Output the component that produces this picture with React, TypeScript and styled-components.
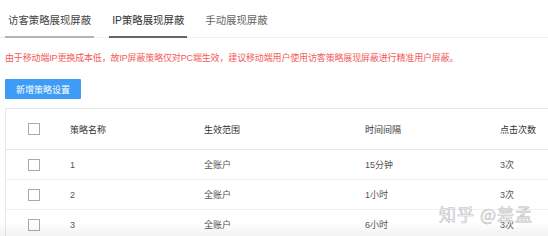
import React from 'react'
import styled, { createGlobalStyle } from 'styled-components'

const GlobalStyle = createGlobalStyle`
  html, body {
    margin: 0;
    padding: 0;
    background: #fff;
    overflow: hidden;
  }
  body {
    font-family: 'Liberation Sans', 'Noto Sans CJK SC', sans-serif;
    color: #555;
  }
`

const tabs = ['访客策略展现屏蔽', 'IP策略展现屏蔽', '手动展现屏蔽']

const rows = [
  { name: '1', scope: '全账户', interval: '15分钟', clicks: '3次' },
  { name: '2', scope: '全账户', interval: '1小时', clicks: '3次' },
  { name: '3', scope: '全账户', interval: '6小时', clicks: '3次' },
]

const App = () => {
  return (
    <Page>
      <GlobalStyle />
      <TabBar>
        {tabs.map((t, i) => (
          <Tab key={t} state={i === 0 ? 'visited' : i === 1 ? 'active' : 'idle'}>
            {t}
          </Tab>
        ))}
      </TabBar>
      <Notice>
        由于移动端IP更换成本低，故IP屏蔽策略仅对PC端生效，建议移动端用户使用访客策略展现屏蔽进行精准用户屏蔽。
      </Notice>
      <AddButton type='button'>新增策略设置</AddButton>
      <Table>
        <Row header>
          <CheckCell>
            <Checkbox />
          </CheckCell>
          <Cell>策略名称</Cell>
          <Cell>生效范围</Cell>
          <Cell>时间间隔</Cell>
          <Cell>点击次数</Cell>
        </Row>
        {rows.map(r => (
          <Row key={r.name}>
            <CheckCell>
              <Checkbox />
            </CheckCell>
            <Cell>{r.name}</Cell>
            <Cell>{r.scope}</Cell>
            <Cell>{r.interval}</Cell>
            <Cell>{r.clicks}</Cell>
          </Row>
        ))}
      </Table>
      <Watermark>知乎 @差孟</Watermark>
      <BottomFade />
    </Page>
  )
}

const Page = styled.main`
  position: relative;
  width: 548px;
  height: 236px;
  overflow: hidden;
  padding-left: 5px;
  box-sizing: border-box;
`

const TabBar = styled.div`
  display: flex;
  height: 38px;
  border-bottom: 1px solid #eee;
  box-sizing: border-box;
  margin-left: -5px;
  padding-left: 5px;
`

const Tab = styled.div<{ state: 'visited' | 'active' | 'idle' }>`
  display: flex;
  align-items: center;
  padding: 3px 3px 0;
  margin-right: 15px;
  margin-bottom: -1px;
  font-size: 10.4px;
  color: ${p => (p.state === 'active' ? '#333' : p.state === 'visited' ? '#444' : '#666')};
  border-bottom: 2px solid
    ${p => (p.state === 'active' ? '#666' : p.state === 'visited' ? '#b4b4b4' : 'transparent')};
`

const Notice = styled.p`
  margin: 0;
  height: 41px;
  line-height: 41px;
  font-size: 9px;
  letter-spacing: -0.15px;
  color: #f25a5a;
  white-space: nowrap;
`

const AddButton = styled.button`
  display: block;
  width: 76px;
  height: 20px;
  padding: 0;
  border: none;
  border-radius: 1px;
  background: #3e9cf6;
  color: #fff;
  font-family: inherit;
  font-size: 9px;
  cursor: pointer;
`

const Table = styled.div`
  margin-top: 9px;
  width: 560px;
  border-top: 1px solid #e6e6e6;
  border-left: 1px solid #e6e6e6;
`

const Row = styled.div<{ header?: boolean }>`
  display: grid;
  grid-template-columns: 64px 134px 161px 135px 1fr;
  align-items: center;
  height: ${p => (p.header ? '40px' : '29px')};
  border-bottom: 1px solid ${p => (p.header ? '#e6e6e6' : '#f0f0f0')};
  font-size: 9px;
  color: ${p => (p.header ? '#333' : '#555')};
`

const Cell = styled.div`
  white-space: nowrap;
`

const CheckCell = styled.div`
  padding-left: 22px;
  display: flex;
  align-items: center;
`

const Checkbox = styled.span`
  display: block;
  width: 10px;
  height: 10px;
  border: 1px solid #aaa;
  background: #fff;
`

const Watermark = styled.div`
  position: absolute;
  right: 15px;
  top: 201px;
  font-size: 17px;
  letter-spacing: 1px;
  font-family: 'Noto Sans CJK SC', sans-serif;
  color: rgba(255, 255, 255, 0.85);
  -webkit-text-stroke: 0.6px #bdbdbd;
  white-space: nowrap;
`

const BottomFade = styled.div`
  position: absolute;
  left: 0;
  right: 0;
  bottom: 0;
  height: 14px;
  background: linear-gradient(to bottom, rgba(0, 0, 0, 0), rgba(0, 0, 0, 0.05));
  pointer-events: none;
`

export default App
